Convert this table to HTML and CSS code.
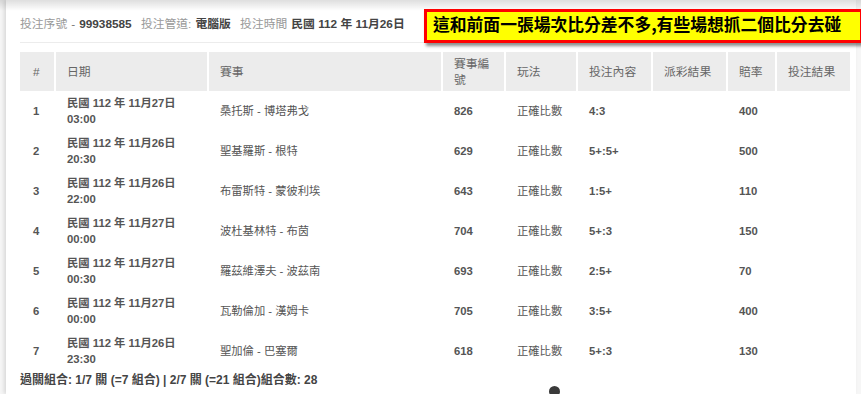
FILE: index.html
```html
<!DOCTYPE html>
<html lang="zh-Hant">
<head>
<meta charset="utf-8">
<title>投注記錄</title>
<link rel="stylesheet" href="styles.css">
</head>
<body>
<div class="page">
  <div class="panel">
    <div class="info">
      <span class="lbl">投注序號</span><span class="sep">-</span><span class="val">99938585</span>
      <span class="lbl">投注管道:</span><span class="val">電腦版</span>
      <span class="lbl">投注時間</span><span class="val">民國 112 年 11月26日</span>
    </div>
    <table class="bets">
      <colgroup>
        <col class="c-no"><col class="c-date"><col class="c-match"><col class="c-id"><col class="c-play"><col class="c-pick"><col class="c-pay"><col class="c-odds"><col class="c-res">
      </colgroup>
      <thead>
        <tr><th>#</th><th>日期</th><th>賽事</th><th>賽事編號</th><th>玩法</th><th>投注內容</th><th>派彩結果</th><th>賠率</th><th>投注結果</th></tr>
      </thead>
      <tbody>
        <tr><td class="b">1</td><td class="b">民國 112 年 11月27日<br>03:00</td><td>桑托斯 - 博塔弗戈</td><td class="b">826</td><td>正確比數</td><td class="b">4:3</td><td></td><td class="b">400</td><td></td></tr>
        <tr><td class="b">2</td><td class="b">民國 112 年 11月26日<br>20:30</td><td>聖基羅斯 - 根特</td><td class="b">629</td><td>正確比數</td><td class="b">5+:5+</td><td></td><td class="b">500</td><td></td></tr>
        <tr><td class="b">3</td><td class="b">民國 112 年 11月26日<br>22:00</td><td>布雷斯特 - 蒙彼利埃</td><td class="b">643</td><td>正確比數</td><td class="b">1:5+</td><td></td><td class="b">110</td><td></td></tr>
        <tr><td class="b">4</td><td class="b">民國 112 年 11月27日<br>00:00</td><td>波杜基林特 - 布茵</td><td class="b">704</td><td>正確比數</td><td class="b">5+:3</td><td></td><td class="b">150</td><td></td></tr>
        <tr><td class="b">5</td><td class="b">民國 112 年 11月27日<br>00:30</td><td>羅茲維澤夫 - 波茲南</td><td class="b">693</td><td>正確比數</td><td class="b">2:5+</td><td></td><td class="b">70</td><td></td></tr>
        <tr><td class="b">6</td><td class="b">民國 112 年 11月27日<br>00:00</td><td>瓦勒倫加 - 漢姆卡</td><td class="b">705</td><td>正確比數</td><td class="b">3:5+</td><td></td><td class="b">400</td><td></td></tr>
        <tr><td class="b">7</td><td class="b">民國 112 年 11月26日<br>23:30</td><td>聖加倫 - 巴塞爾</td><td class="b">618</td><td>正確比數</td><td class="b">5+:3</td><td></td><td class="b">130</td><td></td></tr>
      </tbody>
    </table>
    <div class="summary">過關組合: 1/7 關 (=7 組合) | 2/7 關 (=21 組合)組合數: 28</div>
  </div>
  <div class="note">這和前面一張場次比分差不多,有些場想抓二個比分去碰</div>
  <div class="dot"></div>
</div>
</body>
</html>
```

FILE: styles.css
```css
html, body {
  margin: 0;
  padding: 0;
}
body {
  font-family: "Liberation Sans", "Noto Sans CJK TC", sans-serif;
  background: #f6f6f6;
  color: #555;
  overflow: hidden;
}
.page {
  position: relative;
  width: 861px;
  height: 394px;
  overflow: hidden;
  background: #f6f6f6;
}
.page::before {
  content: "";
  position: absolute;
  left: 0;
  top: 0;
  right: 0;
  height: 11px;
  background: linear-gradient(to bottom, rgba(0,0,0,0.13), rgba(0,0,0,0));
  z-index: 2;
}
.panel {
  margin-left: 6px;
  width: 836px;
  height: 394px;
  padding: 0 0 0 14px;
  background: #fff;
  box-shadow: -2px 0 4px rgba(0,0,0,0.12);
}
.info {
  padding-top: 15px;
  height: 27px;
  line-height: 18px;
  font-size: 11.8px;
  border-bottom: 1px solid #ececec;
  width: 404px;
  white-space: nowrap;
}
.info .lbl {
  color: #999;
  margin-right: 4px;
}
.info .sep {
  color: #777;
  margin-right: 4px;
}
.info .val {
  color: #444;
  font-weight: bold;
  margin-right: 6px;
}
.bets {
  margin-top: 9px;
  width: 830px;
  border-collapse: collapse;
  table-layout: fixed;
}
.c-no { width: 35px; }
.c-date { width: 153px; }
.c-match { width: 234px; }
.c-id { width: 63px; }
.c-play { width: 72px; }
.c-pick { width: 75px; }
.c-pay { width: 75px; }
.c-odds { width: 49px; }
.c-res { width: 74px; }
.bets th {
  background: #ececec;
  color: #666;
  font-weight: normal;
  font-size: 11.8px;
  text-align: left;
  height: 39px;
  padding: 0 4px 0 11px;
  line-height: 16px;
  border-left: 2px solid #fff;
  box-sizing: border-box;
  vertical-align: middle;
}
.bets th:first-child {
  border-left: none;
  padding-left: 13px;
}
.bets td {
  height: 40px;
  padding: 3px 4px 3px 11px;
  font-size: 11.3px;
  line-height: 16px;
  color: #555;
  vertical-align: middle;
  border-left: 2px solid transparent;
  box-sizing: border-box;
}
.bets td:first-child {
  border-left: none;
  padding-left: 13px;
}
.bets td.b {
  font-weight: bold;
}
.summary {
  margin-top: 0;
  font-size: 12px;
  font-weight: bold;
  color: #444;
  line-height: 18px;
}
.note {
  position: absolute;
  left: 424px;
  top: 9px;
  width: 427px;
  height: 28px;
  border: 3px solid #f00;
  background: #ffff00;
  color: #000;
  font-family: "Noto Sans CJK TC", sans-serif;
  font-weight: bold;
  font-size: 16.8px;
  line-height: 24px;
  padding-left: 6px;
  box-sizing: content-box;
  white-space: nowrap;
  box-shadow: 2px 3px 3px rgba(0,0,0,0.45);
  z-index: 3;
}
.dot {
  position: absolute;
  left: 549px;
  top: 386px;
  width: 11px;
  height: 11px;
  border-radius: 50%;
  background: #3a3a3a;
}
```
